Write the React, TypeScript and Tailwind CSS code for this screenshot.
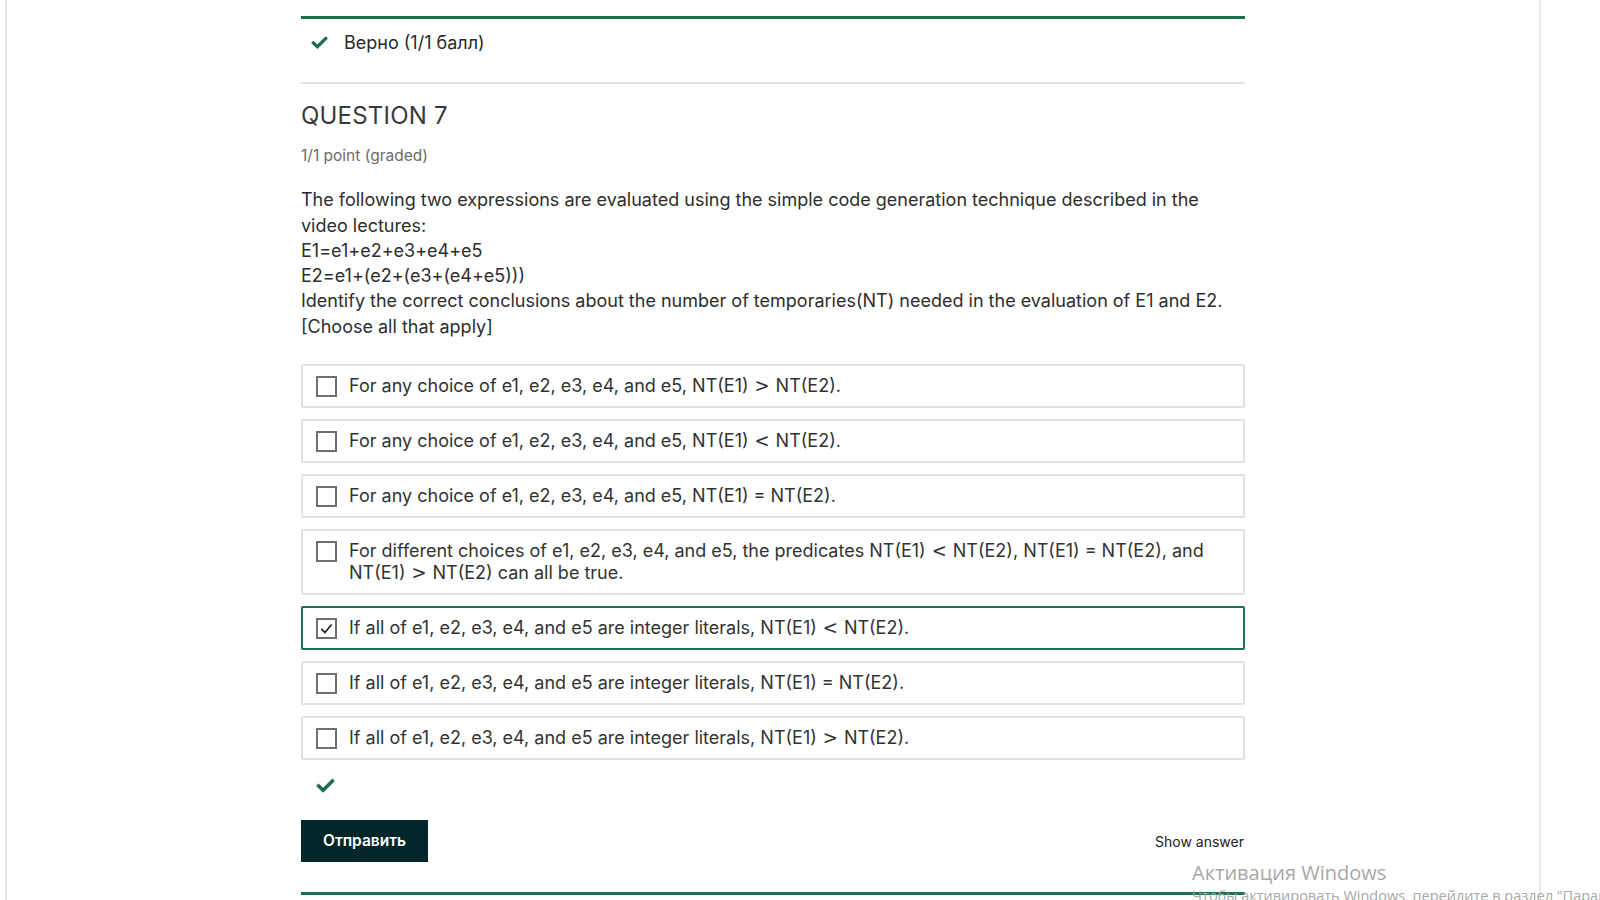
import React from "react";

const options = [
  { text: "For any choice of e1, e2, e3, e4, and e5, NT(E1) > NT(E2).", checked: false },
  { text: "For any choice of e1, e2, e3, e4, and e5, NT(E1) < NT(E2).", checked: false },
  { text: "For any choice of e1, e2, e3, e4, and e5, NT(E1) = NT(E2).", checked: false },
  {
    text: "For different choices of e1, e2, e3, e4, and e5, the predicates NT(E1) < NT(E2), NT(E1) = NT(E2), and NT(E1) > NT(E2) can all be true.",
    checked: false,
  },
  { text: "If all of e1, e2, e3, e4, and e5 are integer literals, NT(E1) < NT(E2).", checked: true },
  { text: "If all of e1, e2, e3, e4, and e5 are integer literals, NT(E1) = NT(E2).", checked: false },
  { text: "If all of e1, e2, e3, e4, and e5 are integer literals, NT(E1) > NT(E2).", checked: false },
];

function MathText({ text }: { text: string }) {
  const parts = text.split(/ ([<>]) /);
  return (
    <>
      {parts.map((p, i) =>
        p === "<" || p === ">" ? (
          <span key={i} className="inline-block mx-[6px] text-[18px] leading-[14px]" style={{ fontFamily: "'DejaVu Serif', serif" }}>
            {p}
          </span>
        ) : (
          <React.Fragment key={i}>{p}</React.Fragment>
        )
      )}
    </>
  );
}

function Check({ className }: { className?: string }) {
  return (
    <svg viewBox="0 0 16 16" className={className} fill="none">
      <path d="M2.2 8.4 L6 12 L13.8 4.2" stroke="#1b6e4a" strokeWidth="3" strokeLinecap="square" />
    </svg>
  );
}

function Box({ checked }: { checked: boolean }) {
  return (
    <div className="w-[21px] h-[21px] shrink-0 border-2 border-[#6f6f6f] bg-white flex items-center justify-center mt-[1px]">
      {checked && (
        <svg viewBox="0 0 16 16" className="w-[15px] h-[15px]" fill="none">
          <path d="M2.5 8.5 L6.3 12.2 L13.5 3.8" stroke="#222" strokeWidth="1.8" />
        </svg>
      )}
    </div>
  );
}

export default function App() {
  return (
    <div className="w-[1600px] h-[900px] overflow-hidden bg-white relative" style={{ fontFamily: "Inter, 'Noto Sans', sans-serif" }}>
      <div className="ml-[5px] w-[1536px] h-[900px] border-l-2 border-r-2 border-[#e8e8e8] bg-white">
        <div className="ml-[294px] w-[944px] pt-[16px]">
          <div className="h-[3px] bg-[#1e6f4b]" />
          <div className="flex items-center h-[47px] pl-[10px] text-[18px] text-[#2a2a2a]">
            <Check className="w-[17px] h-[17px]" />
            <span className="ml-[16px]">Верно (1/1 балл)</span>
          </div>
          <div className="mt-[16px] h-[2px] bg-[#e3e3e3]" />
          <h2 className="mt-[17px] text-[24px] leading-[30px] text-[#3a3a3a] font-normal tracking-[0.2px]">QUESTION 7</h2>
          <div className="mt-[13px] text-[15.5px] text-[#6b6b6b]">1/1 point (graded)</div>
          <div className="mt-[20px] text-[18px] leading-[25.3px] text-[#2e2e2e]">
            <div>The following two expressions are evaluated using the simple code generation technique described in the video lectures:</div>
            <div>E1=e1+e2+e3+e4+e5</div>
            <div>E2=e1+(e2+(e3+(e4+e5)))</div>
            <div>Identify the correct conclusions about the number of temporaries(NT) needed in the evaluation of E1 and E2. [Choose all that apply]</div>
          </div>
          <div className="mt-[25px] flex flex-col gap-[11px]">
            {options.map((o, i) => (
              <div
                key={i}
                className={
                  "flex items-start gap-[12px] rounded-[2px] border-2 px-[13px] py-[9px] text-[18px] leading-[22px] text-[#333] " +
                  (o.checked ? "border-[#1e6f4b]" : "border-[#e2e2e2]")
                }
              >
                <Box checked={o.checked} />
                <div className="pr-[20px]">
                  <MathText text={o.text} />
                </div>
              </div>
            ))}
          </div>
          <div className="mt-[16px] pl-[15px]">
            <Check className="w-[19px] h-[19px]" />
          </div>
          <div className="mt-[25px] flex items-center justify-between">
            <button className="h-[42px] w-[127px] bg-[#03262b] text-white text-[15.5px] font-semibold">Отправить</button>
            <span className="text-[14px] text-[#222] mr-[1px]">Show answer</span>
          </div>
          <div className="mt-[30px] h-[3px] bg-[#1e6f4b]" />
        </div>
      </div>
      <div className="absolute left-[1192px] top-[860px] text-[#a8a8a8] pointer-events-none" style={{ fontFamily: "'Segoe UI', 'Open Sans', 'Noto Sans', sans-serif" }}>
        <div className="text-[20px] leading-[26px]">Активация Windows</div>
        <div className="text-[14.5px] leading-[20px] whitespace-nowrap">Чтобы активировать Windows, перейдите в раздел "Параметры".</div>
      </div>
    </div>
  );
}
